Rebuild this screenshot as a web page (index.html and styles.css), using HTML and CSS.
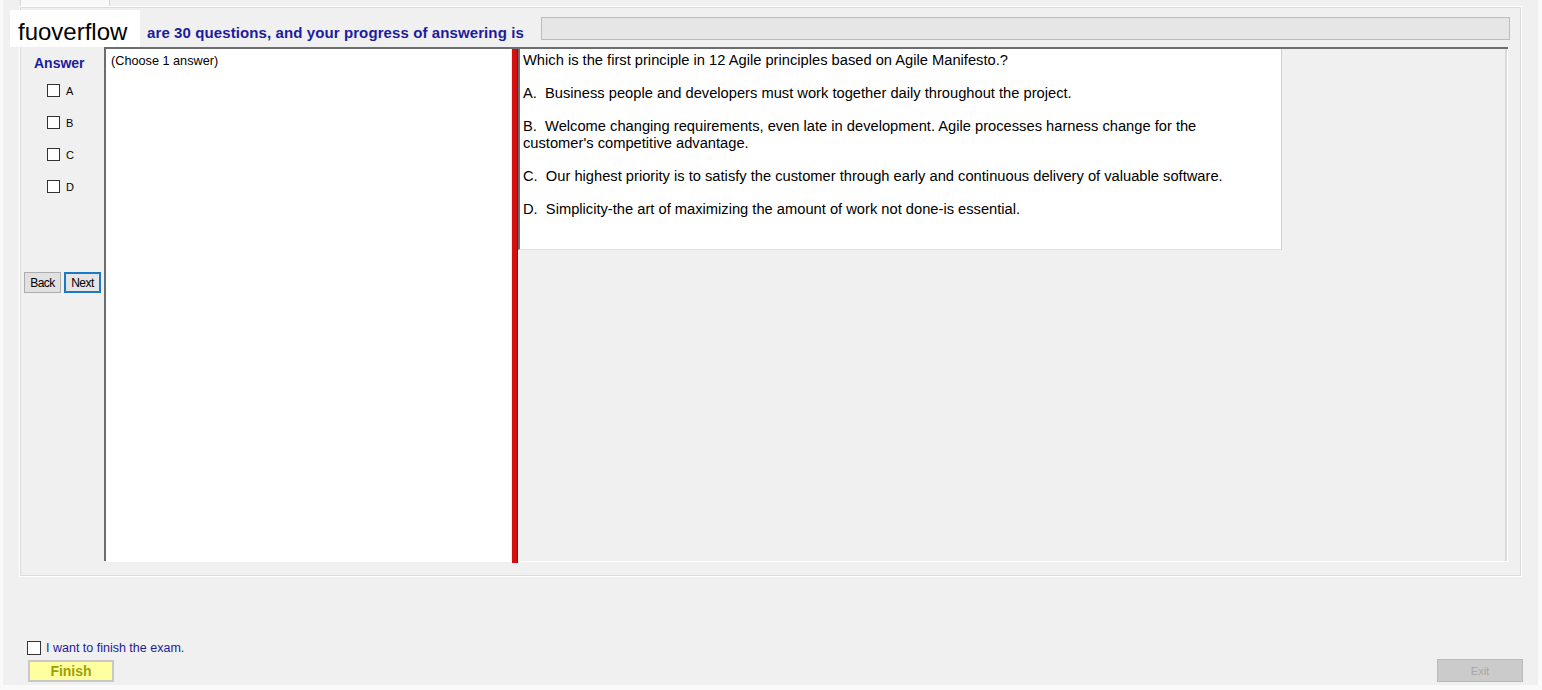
FILE: index.html
```html
<!DOCTYPE html>
<html lang="en">
<head>
    <meta charset="UTF-8">
    <title>Exam</title>
    <link rel="stylesheet" href="styles.css">
</head>
<body>
    <div class="window">
        <!-- Tab strip -->
        <div class="tabs">
            <div class="tab"></div>
        </div>

        <!-- Exam group -->
        <div class="group">
            <div class="header">
                <div class="progress-text">are 30 questions, and your progress of answering is</div>
                <div class="progress-bar"></div>
            </div>

            <div class="main">
                <div class="answer-col">
                    <div class="answer-title">Answer</div>
                    <div class="options">
                        <label class="option"><span class="box"></span>A</label>
                        <label class="option"><span class="box"></span>B</label>
                        <label class="option"><span class="box"></span>C</label>
                        <label class="option"><span class="box"></span>D</label>
                    </div>
                    <div class="nav">
                        <button class="nav-btn">Back</button>
                        <button class="nav-btn focused">Next</button>
                    </div>
                </div>

                <div class="content">
                    <div class="left-panel">(Choose 1 answer)</div>
                    <div class="splitter"></div>
                    <div class="right-panel">
                        <div class="question">
                            <p>Which is the first principle in 12 Agile principles based on Agile Manifesto.?</p>
                            <p>A.&nbsp; Business people and developers must work together daily throughout the project.</p>
                            <p>B.&nbsp; Welcome changing requirements, even late in development. Agile processes harness change for the customer's competitive advantage.</p>
                            <p>C.&nbsp; Our highest priority is to satisfy the customer through early and continuous delivery of valuable software.</p>
                            <p>D.&nbsp; Simplicity-the art of maximizing the amount of work not done-is essential.</p>
                        </div>
                    </div>
                </div>
            </div>
        </div>

        <!-- Footer -->
        <div class="footer">
            <div class="finish-col">
                <label class="finish-check"><span class="box"></span>I want to finish the exam.</label>
                <button class="finish-btn">Finish</button>
            </div>
            <button class="exit-btn">Exit</button>
        </div>

        <div class="watermark">fuoverflow</div>
    </div>
</body>
</html>
```

FILE: styles.css
```css
body {
    margin: 0;
    background-color: #fafafa;
    font-family: "Liberation Sans", Arial, sans-serif;
}

.window {
    position: relative;
    width: 1535px;
    height: 685px;
    margin-left: 3px;
    background-color: #f0f0f0;
}

.tabs {
    height: 6px;
    padding-left: 17px;
}

.tab {
    width: 88px;
    height: 6px;
    background-color: #f9f9f9;
    border-left: 1px solid #d9d9d9;
    border-right: 1px solid #d9d9d9;
}

.group {
    width: 1503px;
    height: 571px;
    margin-left: 16px;
    border: 1px solid #ffffff;
    box-shadow: inset 0 0 0 1px #dcdcdc;
    box-sizing: border-box;
    padding: 10px 13px 0 0;
}

.header {
    display: flex;
    height: 23px;
    margin-bottom: 7px;
}

.progress-text {
    width: 394px;
    padding: 8px 0 0 127px;
    font-size: 15px;
    line-height: 15px;
    font-weight: bold;
    letter-spacing: 0.1px;
    color: #1c1c9c;
    white-space: nowrap;
}

.progress-bar {
    flex: 1;
    height: 23px;
    margin-right: -2px;
    background-color: #e6e6e6;
    border: 1px solid #bcbcbc;
    box-sizing: border-box;
}

.main {
    display: flex;
    height: 515px;
}

.answer-col {
    width: 84px;
    display: flex;
    flex-direction: column;
}

.answer-title {
    margin-top: 8px;
    padding-left: 14px;
    font-size: 14px;
    font-weight: bold;
    color: #1c1c9c;
}

.options {
    margin-top: 13px;
    padding-left: 27px;
    display: flex;
    flex-direction: column;
    gap: 19px;
}

.option {
    display: flex;
    align-items: center;
    gap: 6px;
    height: 13px;
    font-size: 11px;
    color: #000;
}

.box {
    display: inline-block;
    width: 13px;
    height: 13px;
    background-color: #fff;
    border: 1px solid #333;
    box-sizing: border-box;
}

.nav {
    display: flex;
    gap: 3px;
    margin-top: 79px;
    padding-left: 4px;
}

.nav-btn {
    width: 37px;
    height: 21px;
    padding: 0;
    font-family: "Liberation Sans", Arial, sans-serif;
    font-size: 12px;
    letter-spacing: -0.5px;
    color: #000;
    background-color: #e1e1e1;
    border: 1px solid #adadad;
}

.nav-btn.focused {
    border: 2px solid #1c7ac4;
    background-color: #e5e5e5;
}

.content {
    flex: 1;
    display: flex;
    border-top: 2px solid #6d6d6d;
    border-bottom: 1px solid #fff;
}

.left-panel {
    width: 400px;
    background-color: #fff;
    border-left: 2px solid #6d6d6d;
    padding: 5px 0 0 5px;
    font-size: 12.7px;
    color: #000;
}

.splitter {
    width: 5px;
    margin-left: 1px;
    margin-bottom: -2px;
    background-color: #d40f0f;
    border-right: 1px solid #8a1010;
}

.right-panel {
    flex: 1;
    background-color: #f0f0f0;
    border-right: 1px solid #fff;
    box-shadow: inset -2px 0 0 #dadada;
}

.question {
    width: 758px;
    height: 197px;
    padding: 3px 0 0 3px;
    background-color: #fff;
    border-left: 2px solid #6d6d6d;
    border-right: 1px solid #cfcfcf;
    border-bottom: 1px solid #e0e0e0;
    font-size: 14.7px;
    line-height: 17px;
    color: #000;
}

.question p {
    margin: 0 0 16px;
    padding-right: 21px;
}

.footer {
    display: flex;
    justify-content: space-between;
    align-items: flex-end;
    margin-top: 64px;
    padding: 0 15px 0 24px;
}

.finish-col {
    display: flex;
    flex-direction: column;
    gap: 5px;
}

.finish-check {
    display: flex;
    align-items: center;
    gap: 5px;
    height: 14px;
    font-size: 12.5px;
    color: #1c1c96;
}

.finish-check .box {
    width: 14px;
    height: 14px;
}

.finish-btn {
    width: 86px;
    height: 22px;
    margin-left: 1px;
    padding: 0;
    font-family: "Liberation Sans", Arial, sans-serif;
    font-size: 14px;
    font-weight: bold;
    color: #a0a000;
    background-color: #ffffa0;
    border: 2px solid #c8c8c8;
}

.exit-btn {
    width: 86px;
    height: 23px;
    padding: 0;
    margin-bottom: 0;
    font-family: "Liberation Sans", Arial, sans-serif;
    font-size: 11px;
    color: #a6a6a6;
    background-color: #cbcbcb;
    border: 1px solid #b9b9b9;
}

.watermark {
    position: absolute;
    left: 7px;
    top: 10px;
    width: 130px;
    height: 37px;
    padding: 8px 0 0 8px;
    box-sizing: border-box;
    background-color: #fff;
    font-size: 24px;
    line-height: 28px;
    color: #000;
}
```
